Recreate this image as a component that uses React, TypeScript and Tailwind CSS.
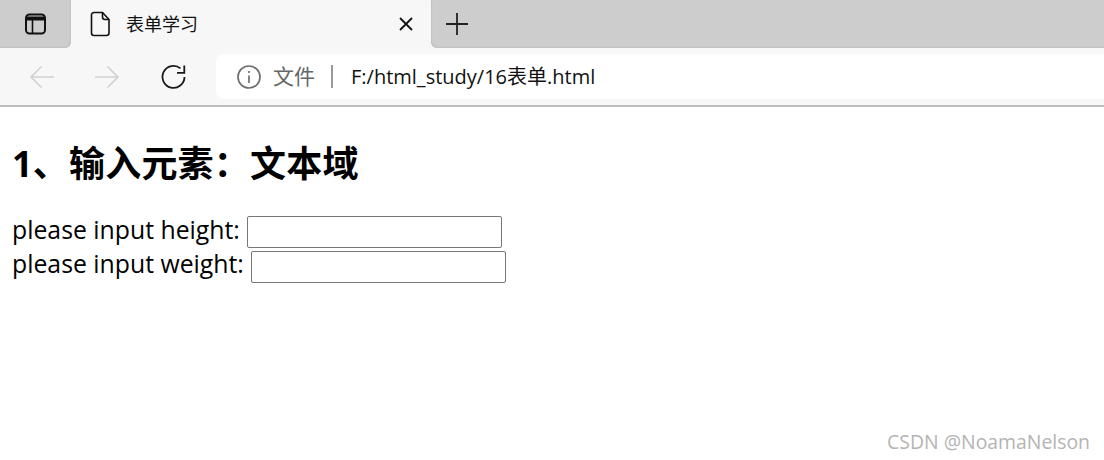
import React from "react";

const CJK = '"Open Sans", "Noto Sans CJK SC", sans-serif';

function SidebarIcon() {
  return (
    <svg width="24" height="24" viewBox="0 0 24 24" fill="none" stroke="#111" strokeWidth="2">
      <rect x="2" y="2.500" width="19" height="19" rx="3.5" />
      <path d="M2.5 6.500h18" strokeWidth="4" />
      <path d="M8.5 8v13" strokeWidth="1.6" />
    </svg>
  );
}

function FileIcon() {
  return (
    <svg width="24" height="26" viewBox="0 0 24 26" fill="none" stroke="#111" strokeWidth="1.6" strokeLinejoin="round">
      <path d="M5 1.5h8.5l6.5 7v13.5a2.5 2.5 0 0 1-2.5 2.5H5a2.5 2.5 0 0 1-2.500-2.500V4A2.500 2.500 0 0 1 5 1.500z" />
      <path d="M13.500 1.500V6a2.500 2.500 0 0 0 2.500 2.500h4" />
    </svg>
  );
}

function Close() {
  return (
    <svg width="14" height="14" viewBox="0 0 14 14" stroke="#111" strokeWidth="1.8">
      <path d="M1 1l12 12M13 1L1 13" />
    </svg>
  );
}

function Plus() {
  return (
    <svg width="22" height="22" viewBox="0 0 22 22" stroke="#222" strokeWidth="1.8">
      <path d="M11 0v22M0 11h22" />
    </svg>
  );
}

function Arrow({ dir }: { dir: "l" | "r" }) {
  return (
    <svg width="26" height="24" viewBox="0 0 26 24" fill="none" stroke="#d2d2d2" strokeWidth="1.700">
      {dir === "l" ? <path d="M25 12H2M12.500 1.500L2 12l10.500 10.500" /> : <path d="M1 12h23M13.500 1.500L24 12 13.500 22.500" />}
    </svg>
  );
}

function Reload() {
  return (
    <svg width="26" height="26" viewBox="0 0 26 26" fill="none" stroke="#1a1a1a" strokeWidth="1.800">
      <path d="M23.500 13A11 11 0 1 1 19.500 4.400" />
      <path d="M23.300 1.500v7.300H16" />
    </svg>
  );
}

function Info() {
  return (
    <svg width="26" height="26" viewBox="0 0 26 26" fill="none" stroke="#6f6f6f" strokeWidth="1.700">
      <circle cx="13" cy="13" r="11" />
      <path d="M13 11.500v7.500" />
      <path d="M13 7v2" />
    </svg>
  );
}

export default function App() {
  return (
    <div className="relative h-[460px] w-[1104px] overflow-hidden bg-white text-black" style={{ fontFamily: CJK }}>
      <div className="flex h-12 items-stretch bg-[#f7f7f7]">
        <div className="flex w-[71px] items-center justify-center rounded-br-md bg-[#cdcdcd] pl-[1px] shadow-[inset_-1px_-1px_1px_#c2c2c2]">
          <SidebarIcon />
        </div>
        <div className="flex w-[360px] items-center rounded-t-lg bg-[#f7f7f7] pl-[18px] pr-[18px]">
          <FileIcon />
          <span className="ml-[13px] flex-1 text-[18px] text-[#111]">表单学习</span>
          <Close />
        </div>
        <div className="flex flex-1 items-center rounded-bl-md bg-[#cdcdcd] pl-[15px] shadow-[inset_1px_-1px_1px_#c2c2c2]">
          <Plus />
        </div>
      </div>
      <div className="flex h-[59px] items-center border-b-2 border-[#bdbdbd] bg-[#f7f7f7]">
        <div className="ml-[29px] flex items-center">
          <Arrow dir="l" />
        </div>
        <div className="ml-[39px] flex items-center">
          <Arrow dir="r" />
        </div>
        <div className="ml-[41px] flex items-center">
          <Reload />
        </div>
        <div className="ml-[29px] flex h-[45px] flex-1 items-center rounded-l-lg bg-white pl-5">
          <Info />
          <span className="ml-[11px] text-[21px] text-[#666]">文件</span>
          <span className="ml-[16px] h-[23px] w-[2px] bg-[#9a9a9a]" />
          <span className="ml-[18px] text-xl text-[#111]">F:/html_study/16表单.html</span>
        </div>
      </div>
      <div className="pl-3">
        <h1 className="mt-[32px] text-[36px] leading-[50px] font-bold tracking-[0.2px]">1、输入元素：文本域</h1>
        <div className="mt-[25px] flex h-[35px] items-center text-[24.8px]">
          <span className="pb-[4px]">please input height:</span>
          <input className="ml-[7px] h-[32px] w-[255px] rounded-[2px] border border-[#767676] bg-white" />
        </div>
        <div className="flex h-[35px] items-center text-[24.8px]">
          <span className="pb-[6px]">please input weight:</span>
          <input className="ml-[7px] h-[32px] w-[255px] rounded-[2px] border border-[#767676] bg-white" />
        </div>
      </div>
      <div className="absolute right-[14px] top-[427px] text-[19.4px] text-[#b4b4b4]">CSDN @NoamaNelson</div>
    </div>
  );
}
